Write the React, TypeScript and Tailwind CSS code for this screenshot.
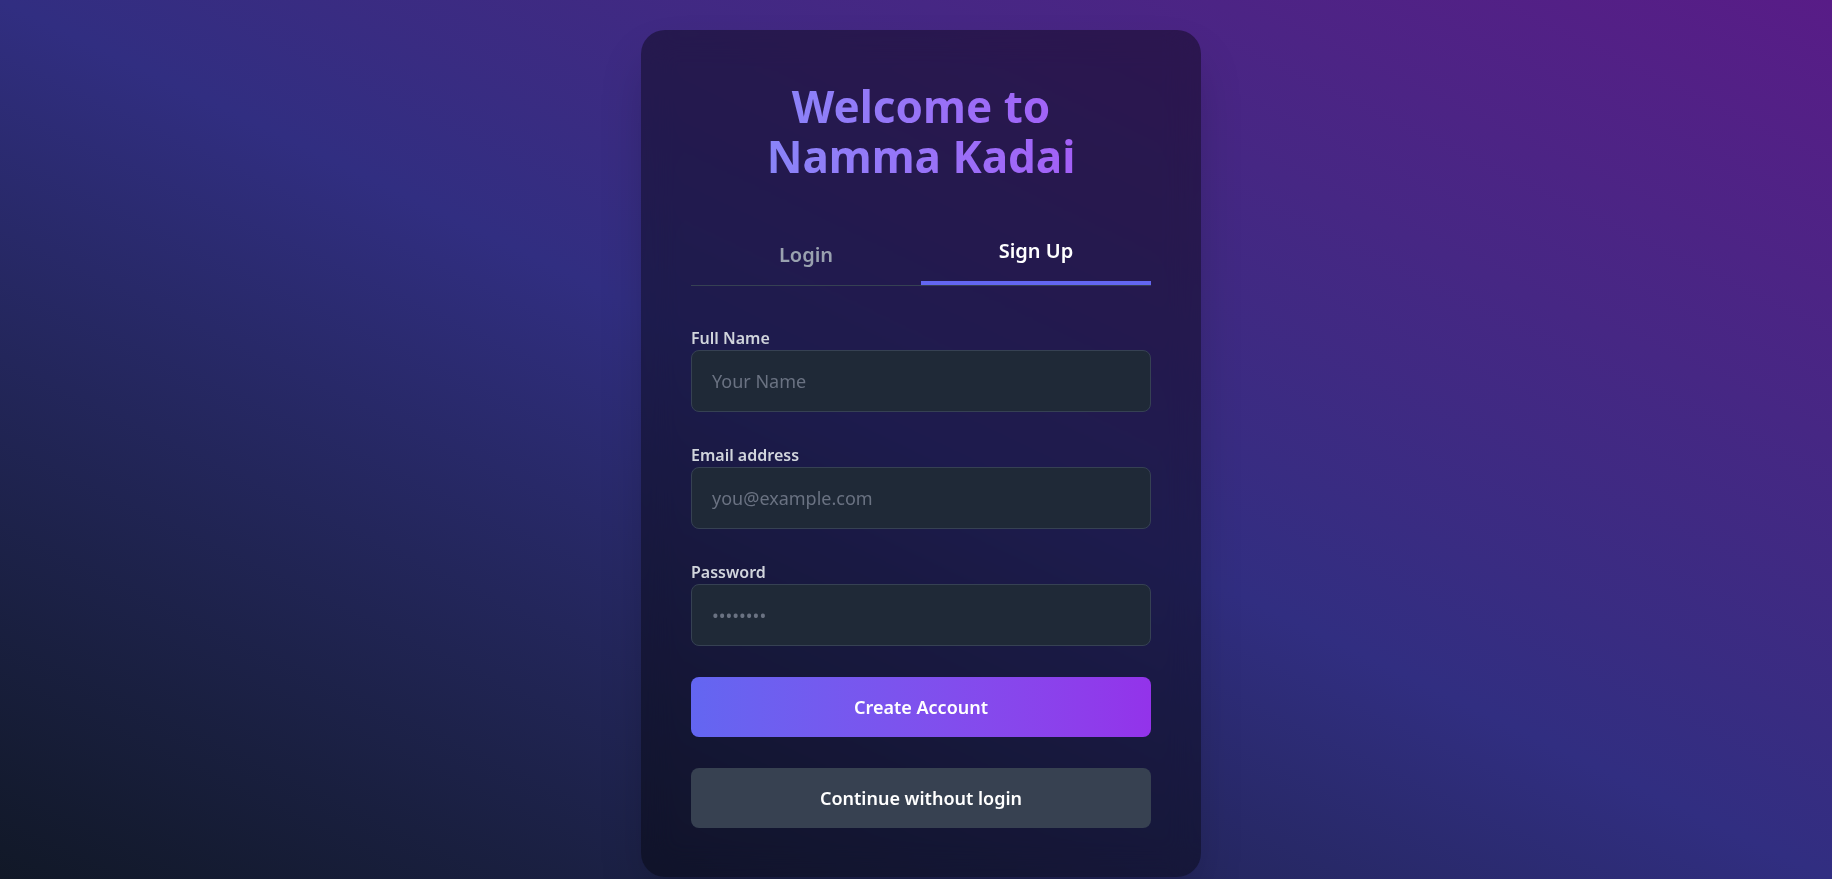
import { useState } from "react";

export default function App() {
  const [tab, setTab] = useState<"login" | "signup">("signup");

  return (
    <div className="min-h-screen w-full bg-linear-to-tr from-[#111827] via-[#312e81] to-[#581c87] flex justify-center pt-[30px] pl-[10px] font-['Noto_Sans',sans-serif]">
      <div className="w-[560px] h-fit rounded-3xl bg-black/40 backdrop-blur-lg shadow-2xl px-[50px] pt-[51px] pb-[49px]">
        <h1 className="text-center text-[44px] leading-[50px] font-bold bg-linear-to-r from-[#818cf8] to-[#a855f7] bg-clip-text text-transparent">
          Welcome to
          <br />
          Namma Kadai
        </h1>

        {/* tabs */}
        <div className="mt-10 flex items-end border-b border-gray-700">
          <button
            onClick={() => setTab("login")}
            className={`flex-1 pt-4 pb-4 text-xl font-semibold ${
              tab === "login" ? "text-white border-b-4 border-[#6366f1]" : "text-gray-400"
            }`}
          >
            Login
          </button>
          <button
            onClick={() => setTab("signup")}
            className={`flex-1 pt-4 pb-4 text-xl font-semibold ${
              tab === "signup" ? "text-white border-b-4 border-[#6366f1]" : "text-gray-400"
            }`}
          >
            Sign Up
          </button>
        </div>

        <form className="mt-10 flex flex-col gap-[31px]" onSubmit={(e) => e.preventDefault()}>
          <div>
            <label className="block text-base font-semibold text-gray-300">Full Name</label>
            <input
              type="text"
              placeholder="Your Name"
              className="w-full rounded-lg border border-gray-700 bg-[#1f2937] px-5 py-4 text-lg text-white placeholder-gray-500 outline-none"
            />
          </div>
          <div>
            <label className="block text-base font-semibold text-gray-300">Email address</label>
            <input
              type="email"
              placeholder="you@example.com"
              className="w-full rounded-lg border border-gray-700 bg-[#1f2937] px-5 py-4 text-lg text-white placeholder-gray-500 outline-none"
            />
          </div>
          <div>
            <label className="block text-base font-semibold text-gray-300">Password</label>
            <input
              type="password"
              placeholder="••••••••"
              className="w-full rounded-lg border border-gray-700 bg-[#1f2937] px-5 py-4 text-lg text-white placeholder-gray-500 outline-none"
            />
          </div>
          <button
            type="submit"
            className="w-full rounded-lg bg-linear-to-r from-[#6366f1] to-[#9333ea] py-4 text-lg font-semibold text-white"
          >
            Create Account
          </button>
          <button type="button" className="w-full rounded-lg bg-[#374151] py-4 text-lg font-semibold text-white">
            Continue without login
          </button>
        </form>
      </div>
    </div>
  );
}
